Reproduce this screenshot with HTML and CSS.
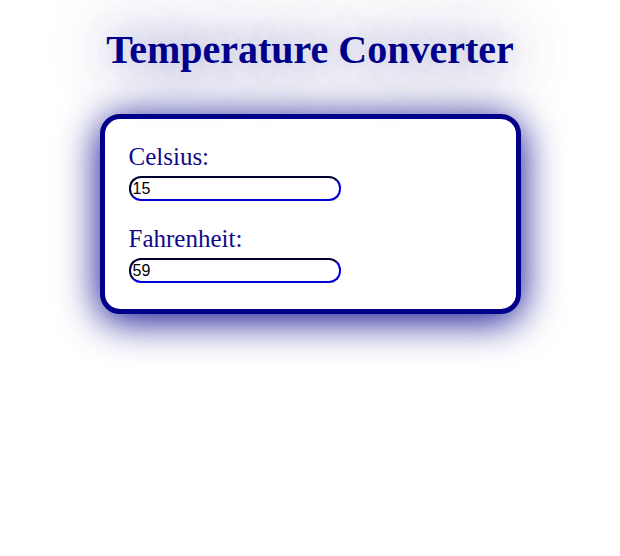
FILE: index.html
```html
<!DOCTYPE html>
<html>
<head>
<meta charset="utf-8">
<title>Temperature Converter</title>
<link rel="stylesheet" href="styles.css">
</head>
<body>
<h1 class="title">Temperature Converter</h1>
<div class="card">
  <label class="field-label" for="celsius">Celsius:</label>
  <input class="field-input" id="celsius" type="text" value="15">
  <label class="field-label second" for="fahrenheit">Fahrenheit:</label>
  <input class="field-input" id="fahrenheit" type="text" value="59">
</div>
</body>
</html>
```

FILE: styles.css
```css
html {
  height: 100%;
  background: #ffffff;
}
body {
  margin: 0;
  padding: 1px 8px 0;
  min-height: calc(100% - 1px);
  background: #ffffff;
  font-family: "Liberation Serif", "Times New Roman", serif;
}
.title {
  font-family: "Liberation Serif", "Times New Roman", serif;
  font-size: 40px;
  font-weight: bold;
  color: #00008b;
  text-align: center;
  margin: 25px 0 41px;
  text-shadow: 0 0 60px rgba(0, 0, 139, 0.75), 0 0 36px rgba(0, 0, 139, 0.2);
}
.card {
  box-sizing: border-box;
  width: 421px;
  margin: 0 auto;
  border: 5px solid #00008b;
  border-radius: 20px;
  padding: 24px 24px 26px 24px;
  background: #ffffff;
  box-shadow: 0 6px 40px #00008b;
  display: flex;
  flex-direction: column;
  align-items: flex-start;
}
.field-label {
  font-size: 25px;
  color: #10088a;
  margin-bottom: 5px;
}
.field-label.second {
  margin-top: 24px;
}
.field-input {
  box-sizing: border-box;
  width: 212px;
  height: 25px;
  font-family: "Liberation Sans", Arial, sans-serif;
  font-size: 16px;
  color: #000;
  padding: 1px 2px;
  border: 2px solid;
  border-color: #000030 #0000d8 #0000d8 #000030;
  border-radius: 12px;
  outline: none;
  background: #fff;
}
```
